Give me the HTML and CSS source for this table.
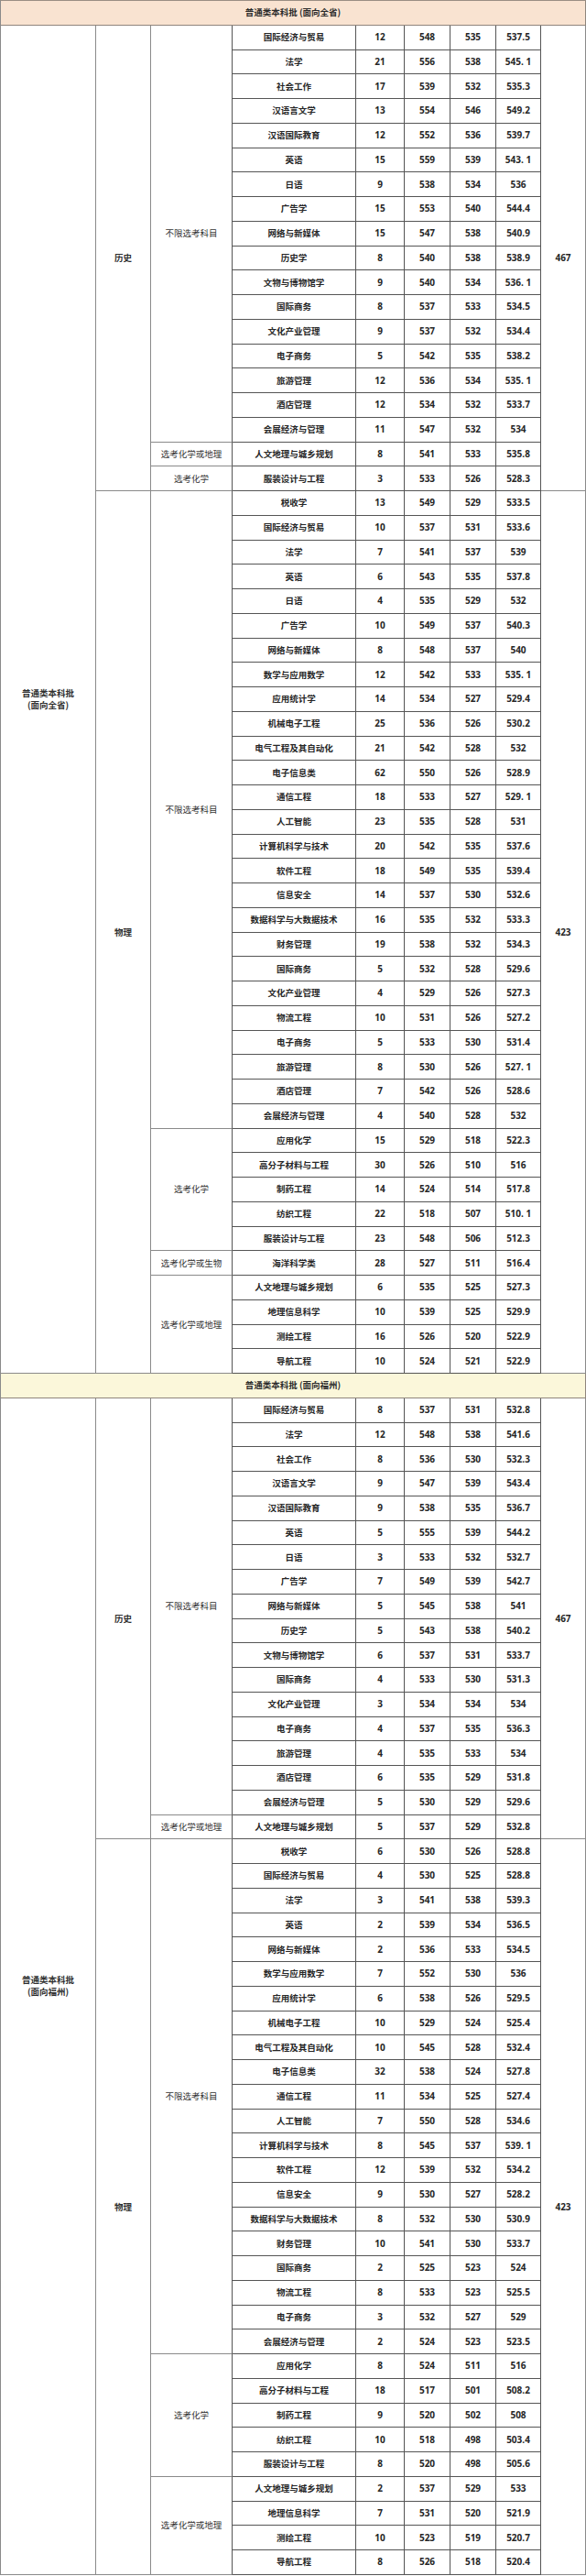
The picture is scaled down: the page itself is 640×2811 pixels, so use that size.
FILE: index.html
```html
<!DOCTYPE html>
<html lang="zh-CN">
<head>
<meta charset="utf-8">
<title>普通类本科批录取分数</title>
<link rel="stylesheet" href="styles.css">
</head>
<body>
<table class="tbl">
<colgroup>
<col class="w-b"><col class="w-s"><col class="w-r"><col class="w-m"><col class="w-n1"><col class="w-n"><col class="w-n"><col class="w-n2"><col class="w-l">
</colgroup>
<tbody>
<tr class="head head-1"><td colspan="9">普通类本科批 (面向全省)</td></tr>
<tr><td class="b" rowspan="55">普通类本科批<br>(面向全省)</td><td class="s" rowspan="19">历史</td><td class="r" rowspan="17">不限选考科目</td><td class="m">国际经济与贸易</td><td class="n">12</td><td class="n">548</td><td class="n">535</td><td class="n">537.5</td><td class="l" rowspan="19">467</td></tr>
<tr><td class="m">法学</td><td class="n">21</td><td class="n">556</td><td class="n">538</td><td class="n">545. 1</td></tr>
<tr><td class="m">社会工作</td><td class="n">17</td><td class="n">539</td><td class="n">532</td><td class="n">535.3</td></tr>
<tr><td class="m">汉语言文学</td><td class="n">13</td><td class="n">554</td><td class="n">546</td><td class="n">549.2</td></tr>
<tr><td class="m">汉语国际教育</td><td class="n">12</td><td class="n">552</td><td class="n">536</td><td class="n">539.7</td></tr>
<tr><td class="m">英语</td><td class="n">15</td><td class="n">559</td><td class="n">539</td><td class="n">543. 1</td></tr>
<tr><td class="m">日语</td><td class="n">9</td><td class="n">538</td><td class="n">534</td><td class="n">536</td></tr>
<tr><td class="m">广告学</td><td class="n">15</td><td class="n">553</td><td class="n">540</td><td class="n">544.4</td></tr>
<tr><td class="m">网络与新媒体</td><td class="n">15</td><td class="n">547</td><td class="n">538</td><td class="n">540.9</td></tr>
<tr><td class="m">历史学</td><td class="n">8</td><td class="n">540</td><td class="n">538</td><td class="n">538.9</td></tr>
<tr><td class="m">文物与博物馆学</td><td class="n">9</td><td class="n">540</td><td class="n">534</td><td class="n">536. 1</td></tr>
<tr><td class="m">国际商务</td><td class="n">8</td><td class="n">537</td><td class="n">533</td><td class="n">534.5</td></tr>
<tr><td class="m">文化产业管理</td><td class="n">9</td><td class="n">537</td><td class="n">532</td><td class="n">534.4</td></tr>
<tr><td class="m">电子商务</td><td class="n">5</td><td class="n">542</td><td class="n">535</td><td class="n">538.2</td></tr>
<tr><td class="m">旅游管理</td><td class="n">12</td><td class="n">536</td><td class="n">534</td><td class="n">535. 1</td></tr>
<tr><td class="m">酒店管理</td><td class="n">12</td><td class="n">534</td><td class="n">532</td><td class="n">533.7</td></tr>
<tr><td class="m">会展经济与管理</td><td class="n">11</td><td class="n">547</td><td class="n">532</td><td class="n">534</td></tr>
<tr><td class="r">选考化学或地理</td><td class="m">人文地理与城乡规划</td><td class="n">8</td><td class="n">541</td><td class="n">533</td><td class="n">535.8</td></tr>
<tr><td class="r">选考化学</td><td class="m">服装设计与工程</td><td class="n">3</td><td class="n">533</td><td class="n">526</td><td class="n">528.3</td></tr>
<tr><td class="s" rowspan="36">物理</td><td class="r" rowspan="26">不限选考科目</td><td class="m">税收学</td><td class="n">13</td><td class="n">549</td><td class="n">529</td><td class="n">533.5</td><td class="l" rowspan="36">423</td></tr>
<tr><td class="m">国际经济与贸易</td><td class="n">10</td><td class="n">537</td><td class="n">531</td><td class="n">533.6</td></tr>
<tr><td class="m">法学</td><td class="n">7</td><td class="n">541</td><td class="n">537</td><td class="n">539</td></tr>
<tr><td class="m">英语</td><td class="n">6</td><td class="n">543</td><td class="n">535</td><td class="n">537.8</td></tr>
<tr><td class="m">日语</td><td class="n">4</td><td class="n">535</td><td class="n">529</td><td class="n">532</td></tr>
<tr><td class="m">广告学</td><td class="n">10</td><td class="n">549</td><td class="n">537</td><td class="n">540.3</td></tr>
<tr><td class="m">网络与新媒体</td><td class="n">8</td><td class="n">548</td><td class="n">537</td><td class="n">540</td></tr>
<tr><td class="m">数学与应用数学</td><td class="n">12</td><td class="n">542</td><td class="n">533</td><td class="n">535. 1</td></tr>
<tr><td class="m">应用统计学</td><td class="n">14</td><td class="n">534</td><td class="n">527</td><td class="n">529.4</td></tr>
<tr><td class="m">机械电子工程</td><td class="n">25</td><td class="n">536</td><td class="n">526</td><td class="n">530.2</td></tr>
<tr><td class="m">电气工程及其自动化</td><td class="n">21</td><td class="n">542</td><td class="n">528</td><td class="n">532</td></tr>
<tr><td class="m">电子信息类</td><td class="n">62</td><td class="n">550</td><td class="n">526</td><td class="n">528.9</td></tr>
<tr><td class="m">通信工程</td><td class="n">18</td><td class="n">533</td><td class="n">527</td><td class="n">529. 1</td></tr>
<tr><td class="m">人工智能</td><td class="n">23</td><td class="n">535</td><td class="n">528</td><td class="n">531</td></tr>
<tr><td class="m">计算机科学与技术</td><td class="n">20</td><td class="n">542</td><td class="n">535</td><td class="n">537.6</td></tr>
<tr><td class="m">软件工程</td><td class="n">18</td><td class="n">549</td><td class="n">535</td><td class="n">539.4</td></tr>
<tr><td class="m">信息安全</td><td class="n">14</td><td class="n">537</td><td class="n">530</td><td class="n">532.6</td></tr>
<tr><td class="m">数据科学与大数据技术</td><td class="n">16</td><td class="n">535</td><td class="n">532</td><td class="n">533.3</td></tr>
<tr><td class="m">财务管理</td><td class="n">19</td><td class="n">538</td><td class="n">532</td><td class="n">534.3</td></tr>
<tr><td class="m">国际商务</td><td class="n">5</td><td class="n">532</td><td class="n">528</td><td class="n">529.6</td></tr>
<tr><td class="m">文化产业管理</td><td class="n">4</td><td class="n">529</td><td class="n">526</td><td class="n">527.3</td></tr>
<tr><td class="m">物流工程</td><td class="n">10</td><td class="n">531</td><td class="n">526</td><td class="n">527.2</td></tr>
<tr><td class="m">电子商务</td><td class="n">5</td><td class="n">533</td><td class="n">530</td><td class="n">531.4</td></tr>
<tr><td class="m">旅游管理</td><td class="n">8</td><td class="n">530</td><td class="n">526</td><td class="n">527. 1</td></tr>
<tr><td class="m">酒店管理</td><td class="n">7</td><td class="n">542</td><td class="n">526</td><td class="n">528.6</td></tr>
<tr><td class="m">会展经济与管理</td><td class="n">4</td><td class="n">540</td><td class="n">528</td><td class="n">532</td></tr>
<tr><td class="r" rowspan="5">选考化学</td><td class="m">应用化学</td><td class="n">15</td><td class="n">529</td><td class="n">518</td><td class="n">522.3</td></tr>
<tr><td class="m">高分子材料与工程</td><td class="n">30</td><td class="n">526</td><td class="n">510</td><td class="n">516</td></tr>
<tr><td class="m">制药工程</td><td class="n">14</td><td class="n">524</td><td class="n">514</td><td class="n">517.8</td></tr>
<tr><td class="m">纺织工程</td><td class="n">22</td><td class="n">518</td><td class="n">507</td><td class="n">510. 1</td></tr>
<tr><td class="m">服装设计与工程</td><td class="n">23</td><td class="n">548</td><td class="n">506</td><td class="n">512.3</td></tr>
<tr><td class="r">选考化学或生物</td><td class="m">海洋科学类</td><td class="n">28</td><td class="n">527</td><td class="n">511</td><td class="n">516.4</td></tr>
<tr><td class="r" rowspan="4">选考化学或地理</td><td class="m">人文地理与城乡规划</td><td class="n">6</td><td class="n">535</td><td class="n">525</td><td class="n">527.3</td></tr>
<tr><td class="m">地理信息科学</td><td class="n">10</td><td class="n">539</td><td class="n">525</td><td class="n">529.9</td></tr>
<tr><td class="m">测绘工程</td><td class="n">16</td><td class="n">526</td><td class="n">520</td><td class="n">522.9</td></tr>
<tr><td class="m">导航工程</td><td class="n">10</td><td class="n">524</td><td class="n">521</td><td class="n">522.9</td></tr>

<tr class="head head-2"><td colspan="9">普通类本科批 (面向福州)</td></tr>
<tr><td class="b" rowspan="48">普通类本科批<br>(面向福州)</td><td class="s" rowspan="18">历史</td><td class="r" rowspan="17">不限选考科目</td><td class="m">国际经济与贸易</td><td class="n">8</td><td class="n">537</td><td class="n">531</td><td class="n">532.8</td><td class="l" rowspan="18">467</td></tr>
<tr><td class="m">法学</td><td class="n">12</td><td class="n">548</td><td class="n">538</td><td class="n">541.6</td></tr>
<tr><td class="m">社会工作</td><td class="n">8</td><td class="n">536</td><td class="n">530</td><td class="n">532.3</td></tr>
<tr><td class="m">汉语言文学</td><td class="n">9</td><td class="n">547</td><td class="n">539</td><td class="n">543.4</td></tr>
<tr><td class="m">汉语国际教育</td><td class="n">9</td><td class="n">538</td><td class="n">535</td><td class="n">536.7</td></tr>
<tr><td class="m">英语</td><td class="n">5</td><td class="n">555</td><td class="n">539</td><td class="n">544.2</td></tr>
<tr><td class="m">日语</td><td class="n">3</td><td class="n">533</td><td class="n">532</td><td class="n">532.7</td></tr>
<tr><td class="m">广告学</td><td class="n">7</td><td class="n">549</td><td class="n">539</td><td class="n">542.7</td></tr>
<tr><td class="m">网络与新媒体</td><td class="n">5</td><td class="n">545</td><td class="n">538</td><td class="n">541</td></tr>
<tr><td class="m">历史学</td><td class="n">5</td><td class="n">543</td><td class="n">538</td><td class="n">540.2</td></tr>
<tr><td class="m">文物与博物馆学</td><td class="n">6</td><td class="n">537</td><td class="n">531</td><td class="n">533.7</td></tr>
<tr><td class="m">国际商务</td><td class="n">4</td><td class="n">533</td><td class="n">530</td><td class="n">531.3</td></tr>
<tr><td class="m">文化产业管理</td><td class="n">3</td><td class="n">534</td><td class="n">534</td><td class="n">534</td></tr>
<tr><td class="m">电子商务</td><td class="n">4</td><td class="n">537</td><td class="n">535</td><td class="n">536.3</td></tr>
<tr><td class="m">旅游管理</td><td class="n">4</td><td class="n">535</td><td class="n">533</td><td class="n">534</td></tr>
<tr><td class="m">酒店管理</td><td class="n">6</td><td class="n">535</td><td class="n">529</td><td class="n">531.8</td></tr>
<tr><td class="m">会展经济与管理</td><td class="n">5</td><td class="n">530</td><td class="n">529</td><td class="n">529.6</td></tr>
<tr><td class="r">选考化学或地理</td><td class="m">人文地理与城乡规划</td><td class="n">5</td><td class="n">537</td><td class="n">529</td><td class="n">532.8</td></tr>
<tr><td class="s" rowspan="30">物理</td><td class="r" rowspan="21">不限选考科目</td><td class="m">税收学</td><td class="n">6</td><td class="n">530</td><td class="n">526</td><td class="n">528.8</td><td class="l" rowspan="30">423</td></tr>
<tr><td class="m">国际经济与贸易</td><td class="n">4</td><td class="n">530</td><td class="n">525</td><td class="n">528.8</td></tr>
<tr><td class="m">法学</td><td class="n">3</td><td class="n">541</td><td class="n">538</td><td class="n">539.3</td></tr>
<tr><td class="m">英语</td><td class="n">2</td><td class="n">539</td><td class="n">534</td><td class="n">536.5</td></tr>
<tr><td class="m">网络与新媒体</td><td class="n">2</td><td class="n">536</td><td class="n">533</td><td class="n">534.5</td></tr>
<tr><td class="m">数学与应用数学</td><td class="n">7</td><td class="n">552</td><td class="n">530</td><td class="n">536</td></tr>
<tr><td class="m">应用统计学</td><td class="n">6</td><td class="n">538</td><td class="n">526</td><td class="n">529.5</td></tr>
<tr><td class="m">机械电子工程</td><td class="n">10</td><td class="n">529</td><td class="n">524</td><td class="n">525.4</td></tr>
<tr><td class="m">电气工程及其自动化</td><td class="n">10</td><td class="n">545</td><td class="n">528</td><td class="n">532.4</td></tr>
<tr><td class="m">电子信息类</td><td class="n">32</td><td class="n">538</td><td class="n">524</td><td class="n">527.8</td></tr>
<tr><td class="m">通信工程</td><td class="n">11</td><td class="n">534</td><td class="n">525</td><td class="n">527.4</td></tr>
<tr><td class="m">人工智能</td><td class="n">7</td><td class="n">550</td><td class="n">528</td><td class="n">534.6</td></tr>
<tr><td class="m">计算机科学与技术</td><td class="n">8</td><td class="n">545</td><td class="n">537</td><td class="n">539. 1</td></tr>
<tr><td class="m">软件工程</td><td class="n">12</td><td class="n">539</td><td class="n">532</td><td class="n">534.2</td></tr>
<tr><td class="m">信息安全</td><td class="n">9</td><td class="n">530</td><td class="n">527</td><td class="n">528.2</td></tr>
<tr><td class="m">数据科学与大数据技术</td><td class="n">8</td><td class="n">532</td><td class="n">530</td><td class="n">530.9</td></tr>
<tr><td class="m">财务管理</td><td class="n">10</td><td class="n">541</td><td class="n">530</td><td class="n">533.7</td></tr>
<tr><td class="m">国际商务</td><td class="n">2</td><td class="n">525</td><td class="n">523</td><td class="n">524</td></tr>
<tr><td class="m">物流工程</td><td class="n">8</td><td class="n">533</td><td class="n">523</td><td class="n">525.5</td></tr>
<tr><td class="m">电子商务</td><td class="n">3</td><td class="n">532</td><td class="n">527</td><td class="n">529</td></tr>
<tr><td class="m">会展经济与管理</td><td class="n">2</td><td class="n">524</td><td class="n">523</td><td class="n">523.5</td></tr>
<tr><td class="r" rowspan="5">选考化学</td><td class="m">应用化学</td><td class="n">8</td><td class="n">524</td><td class="n">511</td><td class="n">516</td></tr>
<tr><td class="m">高分子材料与工程</td><td class="n">18</td><td class="n">517</td><td class="n">501</td><td class="n">508.2</td></tr>
<tr><td class="m">制药工程</td><td class="n">9</td><td class="n">520</td><td class="n">502</td><td class="n">508</td></tr>
<tr><td class="m">纺织工程</td><td class="n">10</td><td class="n">518</td><td class="n">498</td><td class="n">503.4</td></tr>
<tr><td class="m">服装设计与工程</td><td class="n">8</td><td class="n">520</td><td class="n">498</td><td class="n">505.6</td></tr>
<tr><td class="r" rowspan="4">选考化学或地理</td><td class="m">人文地理与城乡规划</td><td class="n">2</td><td class="n">537</td><td class="n">529</td><td class="n">533</td></tr>
<tr><td class="m">地理信息科学</td><td class="n">7</td><td class="n">531</td><td class="n">520</td><td class="n">521.9</td></tr>
<tr><td class="m">测绘工程</td><td class="n">10</td><td class="n">523</td><td class="n">519</td><td class="n">520.7</td></tr>
<tr><td class="m">导航工程</td><td class="n">8</td><td class="n">526</td><td class="n">518</td><td class="n">520.4</td></tr>
</tbody>
</table>
</body>
</html>
```
FILE: styles.css
```css
html, body {
  margin: 0;
  padding: 0;
  background: #ffffff;
}

body {
  font-family: "Noto Sans CJK SC", "Open Sans", sans-serif;
  color: #222222;
}

.tbl {
  border-collapse: separate;
  border-spacing: 0;
  table-layout: fixed;
  width: 640px;
  border-left: 1px solid #8a8a8a;
  border-top: 1px solid #9a8e84;
}

.w-b { width: 104px; }
.w-s { width: 60px; }
.w-r { width: 89px; }
.w-m { width: 135px; }
.w-n1 { width: 53px; }
.w-n { width: 50px; }
.w-n2 { width: 49px; }
.w-l { width: 49px; }

.tbl tr {
  height: 26.76px;
}

.tbl td {
  padding: 0;
  text-align: center;
  vertical-align: middle;
  white-space: nowrap;
  overflow: hidden;
  border-right: 1px solid #8a8a8a;
  border-bottom: 1px solid #8a8a8a;
  font-size: 9.5px;
  line-height: 13px;
}

.head td {
  font-weight: bold;
  color: #2a2a2a;
  border-bottom-color: #8f857c;
  border-right-color: #8f857c;
}

.head-1 td {
  background: #f9e3d1;
}

.head-2 td {
  background: #fbf7da;
}

.b {
  font-weight: bold;
  color: #2e2e2e;
  line-height: 14px;
}

.s {
  font-weight: bold;
  color: #2e2e2e;
}

.r {
  color: #333333;
  border-right-color: #555555 !important;
}

.m {
  font-weight: bold;
  color: #262626;
  border-right-color: #555555 !important;
  border-bottom-color: #555555 !important;
}

.n {
  font-family: "Open Sans", "Noto Sans", sans-serif;
  font-size: 10px !important;
  font-weight: bold;
  color: #262626;
  border-right-color: #555555 !important;
  border-bottom-color: #555555 !important;
}

.l {
  font-family: "Open Sans", "Noto Sans", sans-serif;
  font-size: 10px !important;
  font-weight: bold;
  color: #262626;
}
```
